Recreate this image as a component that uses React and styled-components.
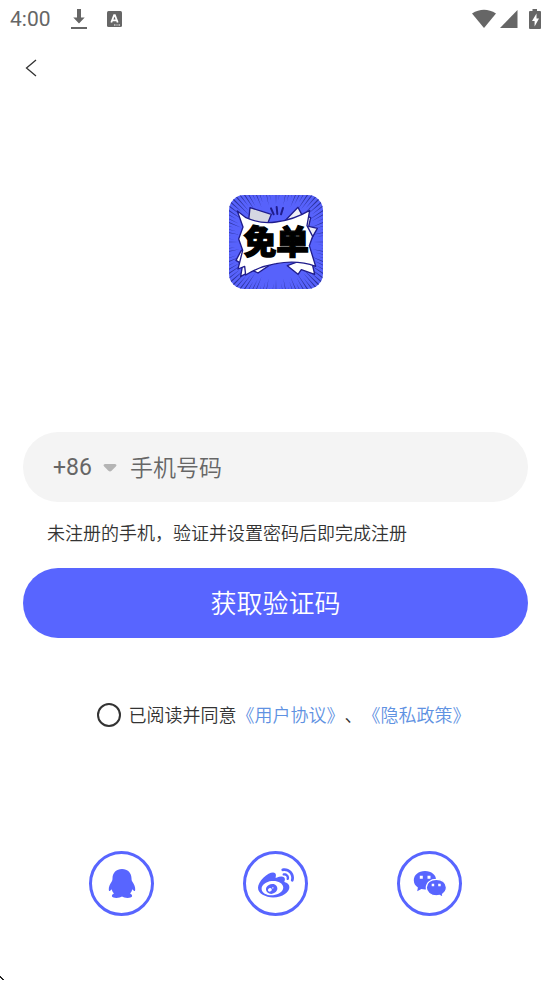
import React, { useState } from 'react'
import styled, { createGlobalStyle } from 'styled-components'
import { FaWeibo } from 'react-icons/fa'

const PRIMARY = '#5865ff'

const App = () => {
  const [phone, setPhone] = useState('')
  const [agreed, setAgreed] = useState(false)

  return (
    <>
      <GlobalStyle />
      <Page>
        <StatusBar>
          <StatusGroup>
            <Clock>4:00</Clock>
            <DownloadIcon />
            <LetterIcon />
          </StatusGroup>
          <StatusIcons />
        </StatusBar>

        <Header>
          <BackButton type="button" aria-label="返回">
            <svg width="12" height="18" viewBox="0 0 12 18" fill="none">
              <path d="M11 1L1.500 9L11 17" stroke="#333" strokeWidth="1.300" />
            </svg>
          </BackButton>
        </Header>

        <LogoArea>
          <Logo />
        </LogoArea>

        <Form onSubmit={e => e.preventDefault()}>
          <PhoneField>
            <CountryCode>
              <select aria-label="国家代码" defaultValue="+86">
                <option>+86</option>
              </select>
              <svg width="14" height="8" viewBox="0 0 14 8">
                <path
                  d="M2 0H12Q14.500 .8 12.800 2.600L8.600 6.800Q7 8 5.400 6.800L1.200 2.600Q-.5 .8 2 0Z"
                  fill="#b4b4b4"
                />
              </svg>
            </CountryCode>
            <PhoneInput
              type="tel"
              aria-label="手机号码"
              placeholder="手机号码"
              value={phone}
              onChange={e => setPhone(e.target.value)}
            />
          </PhoneField>
          <Hint>未注册的手机，验证并设置密码后即完成注册</Hint>
          <SubmitButton type="submit">获取验证码</SubmitButton>
        </Form>

        <Consent>
          <Radio
            id="agree"
            type="radio"
            checked={agreed}
            onClick={() => setAgreed(!agreed)}
            onChange={() => {}}
          />
          <p>
            <label htmlFor="agree">已阅读并同意</label>
            <a href="#agreement">《用户协议》</a>、<a href="#privacy">《隐私政策》</a>
          </p>
        </Consent>

        <Socials>
          <SocialButton type="button" aria-label="QQ">
            <QqIcon />
          </SocialButton>
          <SocialButton type="button" aria-label="微博">
            <FaWeibo size={36} />
          </SocialButton>
          <SocialButton type="button" aria-label="微信">
            <WechatIcon />
          </SocialButton>
        </Socials>
      </Page>
      <Pointer width="5" height="5" viewBox="0 0 5 5">
        <path d="M0 0h1v1h1v1h1v1h1v1h-2v-1h-1v-1h-1z" fill="#222" />
      </Pointer>
    </>
  )
}

const DownloadIcon = () => (
  <svg width="16" height="20" viewBox="0 0 16 20" fill="#666">
    <path d="M6 0h4v8.500h3.700L8 14.500L2.300 8.500H6zM0 18h16v2H0z" />
  </svg>
)

const LetterIcon = () => (
  <svg width="15" height="16" viewBox="0 0 15 16">
    <rect width="15" height="16" rx="1.500" fill="#666" />
    <path
      d="M4.300 11.500L7.100 4.200h.8l2.800 7.300M5.400 9.300h4.200"
      fill="none"
      stroke="#fff"
      strokeWidth="1.800"
    />
    <path d="M7 14h1.500M9.500 14h1M11.500 14h1.500" stroke="#fff" />
  </svg>
)

const StatusIcons = () => (
  <svg width="69" height="20" viewBox="0 0 69 20" fill="#666">
    <path d="M0 4.500Q12 -3 24 4.500L12 19z" />
    <path d="M45.500 1V19H28z" />
    <path d="M60.500 0h4.500v2h3q1 0 1 1v16q0 1-1 1h-10q-1 0-1-1v-16q0-1 1-1h2.500z" />
    <path d="M64.500 4.500L60 12h2.600v5.500L67 9.500h-2.500z" fill="#fff" />
  </svg>
)

const QqIcon = () => (
  <svg width="28" height="30" viewBox="0 0 28 30" fill="currentColor">
    <path d="M14 0C8.300 0 4.600 3.900 4.500 9.300C4.500 10.800 4.200 11.700 3.600 12.800C1.800 15.400 .6 18.300 .8 20.700C.9 22.500 1.800 22.700 3.600 20.300C4 21.800 4.800 23.200 5.900 24.400C4.300 25.200 3.600 26.200 4 27.500C4.600 29.400 11.800 29.300 14 27.600C16.200 29.300 23.400 29.400 24 27.500C24.400 26.200 23.700 25.200 22.100 24.400C23.200 23.200 24 21.800 24.400 20.300C26.200 22.700 27.100 22.500 27.200 20.700C27.400 18.300 26.200 15.400 24.400 12.800C23.800 11.700 23.500 10.800 23.500 9.300C23.400 3.900 19.700 0 14 0Z" />
  </svg>
)

const WechatIcon = () => (
  <svg width="34" height="28" viewBox="0 0 34 28" fill="currentColor">
    <path d="M12 1C5.500 1 .8 5 .8 10.300C.8 13.300 2.300 15.900 4.900 17.600L4.200 21.300L8.400 19.100C9.500 19.400 10.700 19.600 12 19.600C18.500 19.600 23.200 15.600 23.200 10.300C23.200 5 18.500 1 12 1Z" />
    <path
      d="M23.300 9.300C17.700 9.300 13.300 12.800 13.300 17.600C13.300 22.300 17.700 25.800 23.300 25.800C24.400 25.800 25.500 25.700 26.500 25.400L30 27.300L29.500 24.200C31.900 22.700 33.400 20.400 33.400 17.600C33.400 12.800 29 9.300 23.300 9.300Z"
      stroke="#fff"
      strokeWidth="1.200"
    />
    <path
      d="M6.800 5.800h3v3h-3zM14.500 5.800h3v3h-3zM18.700 13.700h2.500v2.500h-2.500zM25.200 13.700h2.500v2.500h-2.500z"
      fill="#fff"
    />
  </svg>
)

// speed lines radiating from the middle of the logo
const rays = Array.from({ length: 96 }, (_, i) => {
  const angle = (i / 96) * Math.PI * 2
  const inner = 112 + (i % 3) * 12
  const point = (r, a) =>
    `${(166 + r * Math.cos(a)).toFixed(1)} ${(165 + r * Math.sin(a)).toFixed(1)}`
  return `M${point(inner, angle)}L${point(210, angle - 0.014)}L${point(210, angle + 0.014)}Z`
}).join('')

const Logo = () => (
  <svg width="94" height="94" viewBox="25 24 282 282" role="img" aria-label="免单">
    <defs>
      <clipPath id="logo-shape">
        <rect x="25" y="24" width="282" height="282" rx="46" />
      </clipPath>
    </defs>
    <g clipPath="url(#logo-shape)">
      <rect x="25" y="24" width="282" height="282" fill="#5762fb" />
      <path d={rays} fill="#2c339e" />
      <g stroke="#1f1c8c" strokeWidth="4" strokeLinejoin="round">
        <path d="M88 62L152 82L140 112L84 100Z" fill="#d5d6e2" />
        <path d="M196 98L232 61L243 82L270 92L264 118L290 124L270 160Z" fill="#eeeef6" />
        <path d="M62 190L46 220L66 232L60 268L96 250L112 258L150 232Z" fill="#fff" />
        <path d="M200 236L232 262L242 248L282 262L270 210Z" fill="#fff" />
        <path
          d="M50 72L76 92Q120 112 166 105Q220 98 267 70L259 116L276 148L266 176L285 238Q230 218 166 230Q116 238 75 264L72 238L52 246L66 190L54 156L67 120Z"
          fill="#fff"
        />
      </g>
      <path
        d="M151 64L159 82M168 60L170 81M187 63L181 82"
        stroke="#1f1c8c"
        strokeWidth="6"
        strokeLinecap="round"
      />
      <LogoText x="167" y="201" textAnchor="middle">
        免单
      </LogoText>
    </g>
  </svg>
)

const GlobalStyle = createGlobalStyle`
  * {
    box-sizing: border-box;
  }

  body {
    margin: 0;
    background: #fff;
    color: #333;
    font-family: Roboto, 'Noto Sans CJK SC', sans-serif;
    font-size: 18px;
    line-height: 24px;
    text-spacing-trim: space-all;
  }

  button,
  input,
  select {
    margin: 0;
    padding: 0;
    border: 0;
    background: none;
    color: inherit;
    font: inherit;
  }

  svg {
    display: block;
  }
`

const Page = styled.main`
  display: flex;
  flex-direction: column;
  padding-bottom: 64px;
`

const StatusBar = styled.div`
  display: flex;
  align-items: center;
  justify-content: space-between;
  height: 38px;
  padding: 0 10px;
`

const StatusGroup = styled.div`
  display: flex;
  align-items: center;
  gap: 20px;
`

const Clock = styled.span`
  color: #666;
  font-size: 21px;
`

const Header = styled.header`
  display: flex;
  align-items: center;
  height: 60px;
  padding: 0 16px;
`

const BackButton = styled.button`
  display: flex;
  align-items: center;
  justify-content: center;
  width: 30px;
  height: 30px;
`

const LogoArea = styled.div`
  display: flex;
  justify-content: center;
  padding: 97px 0 143px;
`

const LogoText = styled.text`
  fill: #000;
  stroke: #000;
  stroke-width: 4px;
  font-family: 'Noto Sans CJK SC', sans-serif;
  font-size: 98px;
  font-weight: 900;
`

const Form = styled.form`
  display: flex;
  flex-direction: column;
  padding: 0 23px;
`

const PhoneField = styled.div`
  display: flex;
  align-items: center;
  gap: 13px;
  height: 70px;
  padding: 2px 30px 0;
  border-radius: 35px;
  background: #f4f4f4;
  color: #666;
  font-size: 23px;
`

const CountryCode = styled.div`
  display: grid;
  grid-template-columns: 50px 14px;
  align-items: center;

  select {
    grid-area: 1 / 1 / 2 / 3;
    appearance: none;
    height: 34px;
  }

  svg {
    grid-area: 1 / 2;
    pointer-events: none;
  }
`

const PhoneInput = styled.input`
  flex: 1;
  min-width: 0;
  height: 34px;
  outline: none;

  &::placeholder {
    color: #666;
    opacity: 1;
    font-weight: 350;
  }
`

const Hint = styled.p`
  margin: 20px 24px 22px;
  font-weight: 350;
`

const SubmitButton = styled.button`
  height: 70px;
  padding-top: 2px;
  border-radius: 35px;
  background: ${PRIMARY};
  color: #fff;
  font-size: 26px;
  font-weight: 350;
  cursor: pointer;
`

const Consent = styled.div`
  display: flex;
  align-items: center;
  justify-content: center;
  gap: 8px;
  padding: 64px 0 123px 16px;
  font-weight: 350;

  p {
    margin: 2px 0 0;
  }

  a {
    color: #5f92e2;
    text-decoration: none;
  }
`

const Radio = styled.input`
  appearance: none;
  width: 24px;
  height: 24px;
  margin: 0;
  border: 2px solid #333;
  border-radius: 50%;

  &:checked {
    border-color: ${PRIMARY};
    background: ${PRIMARY};
  }
`

const Socials = styled.div`
  display: flex;
  justify-content: space-between;
  padding: 0 89px;
`

const SocialButton = styled.button`
  display: flex;
  align-items: center;
  justify-content: center;
  width: 65px;
  height: 65px;
  border: 3px solid ${PRIMARY};
  border-radius: 50%;
  color: ${PRIMARY};
  cursor: pointer;
`

const Pointer = styled.svg`
  position: fixed;
  bottom: 0;
  left: 0;
`

export default App
